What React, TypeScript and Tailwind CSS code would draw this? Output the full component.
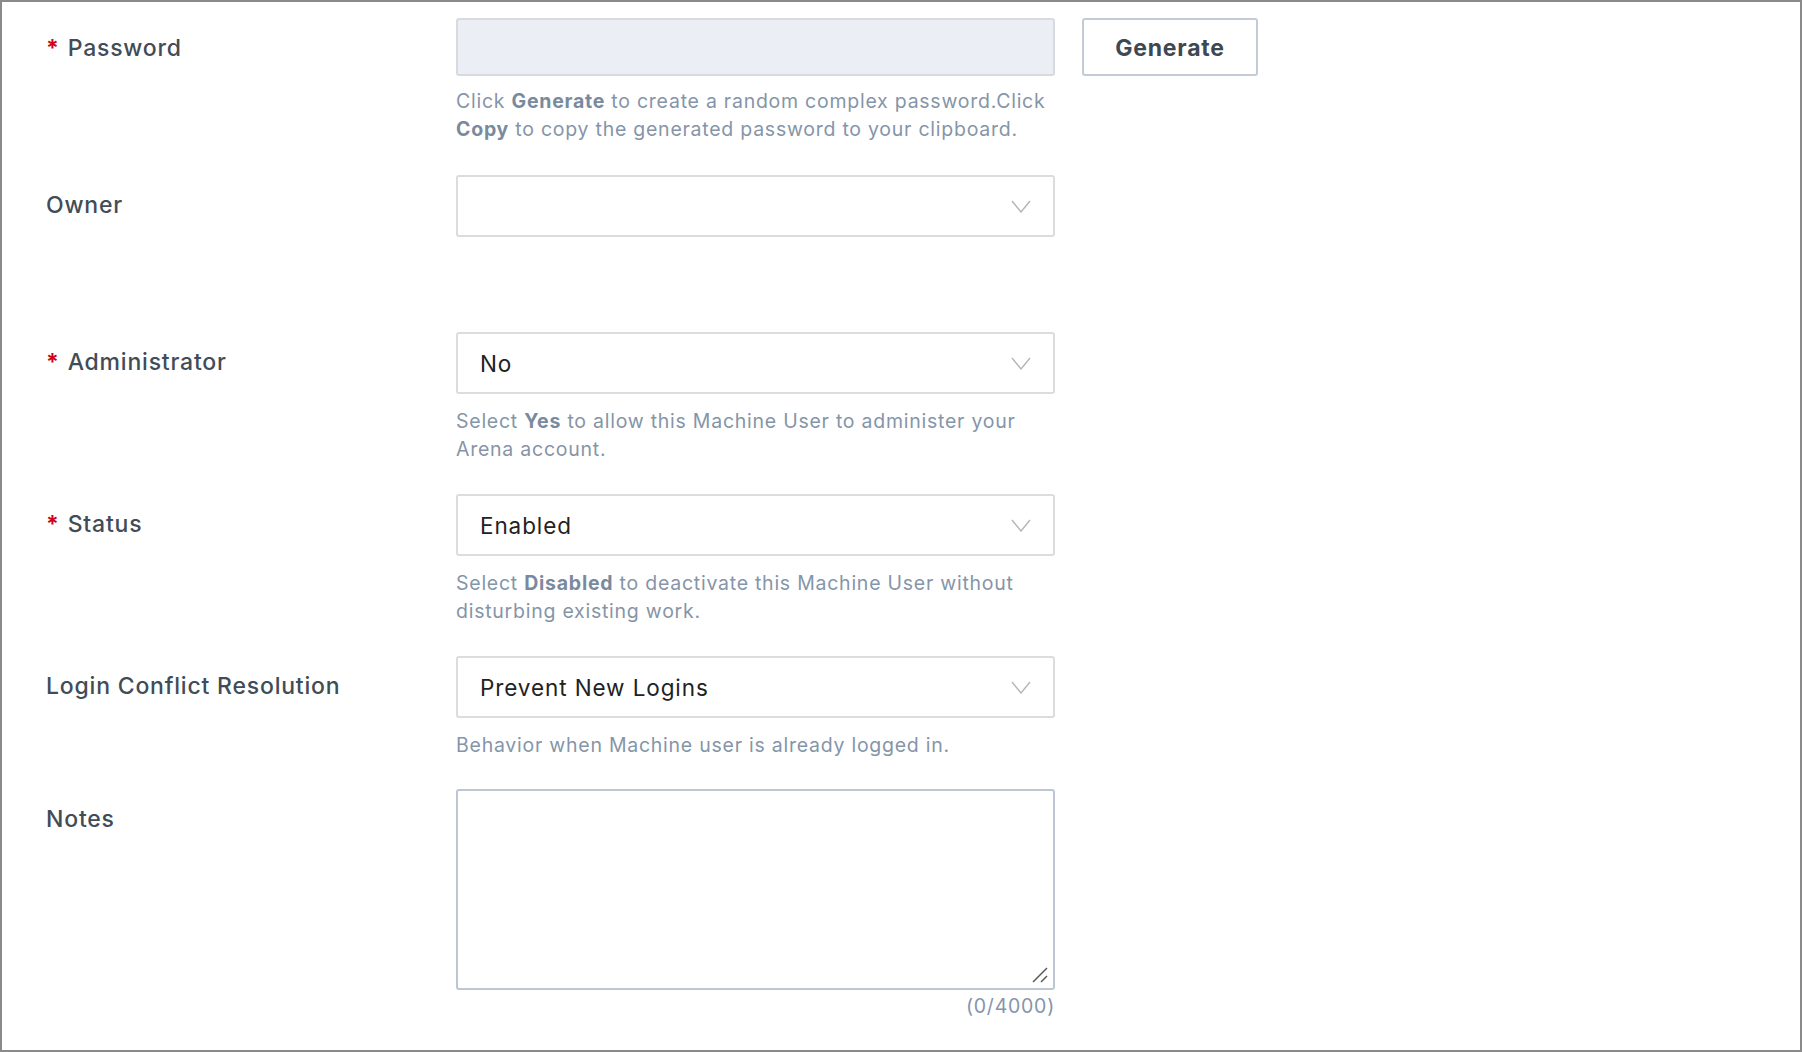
import type { ReactNode } from "react";

function Chevron() {
  return (
    <svg width="20" height="13" viewBox="0 0 20 13" fill="none" className="shrink-0">
      <path d="M1 1L10 12L19 1" stroke="#b5b5b5" strokeWidth="1.4" />
    </svg>
  );
}

function FieldRow({
  label,
  required,
  children,
  className = "",
}: {
  label: string;
  required?: boolean;
  children: ReactNode;
  className?: string;
}) {
  return (
    <div className={`flex ${className}`}>
      <div className="w-[410px] shrink-0 pt-[14px] text-[23px] font-medium leading-[32px] tracking-[0.8px] text-[#424c56]">
        {required && <span className="mr-[8px] font-bold text-[#d0021b]">*</span>}
        {label}
      </div>
      <div className="flex flex-col">{children}</div>
    </div>
  );
}

function SelectBox({ value }: { value?: string }) {
  return (
    <div className="flex h-[62px] w-[599px] items-center justify-between rounded-[3px] border-2 border-[#dcdcdc] bg-white pl-[22px] pr-[22px]">
      <span className="pt-[2px] text-[22.5px] tracking-[0.9px] text-[#222222]">{value ?? ""}</span>
      <Chevron />
    </div>
  );
}

function Help({ children }: { children: ReactNode }) {
  return (
    <p className="mt-[13px] w-[599px] text-[19.5px] leading-[28px] tracking-[0.75px] text-[#8595a8]">
      {children}
    </p>
  );
}

function Strong({ children }: { children: ReactNode }) {
  return <span className="font-bold text-[#7a8a9e]">{children}</span>;
}

export default function App() {
  return (
    <div className="h-[1052px] w-[1802px] border-2 border-[#8a8a8a] bg-white font-['Inter',sans-serif]">
      <div className="pl-[44px] pt-4">
        <FieldRow label="Password" required>
          <div className="flex items-start">
            <input
              readOnly
              className="h-[58px] w-[599px] rounded-[3px] border-2 border-[#d9dade] bg-[#ebeef5] outline-none"
            />
            <button className="ml-[27px] h-[58px] w-[176px] rounded-[3px] border-2 border-[#c2ccd8] bg-white pt-[2px] text-[23px] font-bold tracking-[0.8px] text-[#3d4851]">
              Generate
            </button>
          </div>
          <p className="mt-[11px] w-[599px] text-[19.5px] leading-[28px] tracking-[0.75px] text-[#8595a8]">
            Click <Strong>Generate</Strong> to create a random complex password.Click{" "}
            <Strong>Copy</Strong> to copy the generated password to your clipboard.
          </p>
        </FieldRow>

        <FieldRow label="Owner" className="mt-[32px]">
          <SelectBox />
        </FieldRow>

        <FieldRow label="Administrator" required className="mt-[95px]">
          <SelectBox value="No" />
          <Help>
            Select <Strong>Yes</Strong> to allow this Machine User to administer your Arena account.
          </Help>
        </FieldRow>

        <FieldRow label="Status" required className="mt-[31px]">
          <SelectBox value="Enabled" />
          <Help>
            Select <Strong>Disabled</Strong> to deactivate this Machine User without disturbing existing
            work.
          </Help>
        </FieldRow>

        <FieldRow label="Login Conflict Resolution" className="mt-[31px]">
          <SelectBox value="Prevent New Logins" />
          <Help>Behavior when Machine user is already logged in.</Help>
        </FieldRow>

        <FieldRow label="Notes" className="mt-[30px]">
          <div className="relative h-[201px] w-[599px]">
            <textarea className="h-full w-full resize-none rounded-[3px] border-2 border-[#bcc7d3] bg-white outline-none" />
            <svg
              width="18"
              height="18"
              viewBox="0 0 18 18"
              className="pointer-events-none absolute bottom-[6px] right-[6px]"
            >
              <path d="M2 16L16 2M10 16L16 10" stroke="#5a5a5a" strokeWidth="1.5" />
            </svg>
          </div>
          <p className="mt-[2px] w-[599px] text-right text-[19.5px] leading-[28px] tracking-[0.75px] text-[#8595a8]">
            (0/4000)
          </p>
        </FieldRow>
      </div>
    </div>
  );
}
